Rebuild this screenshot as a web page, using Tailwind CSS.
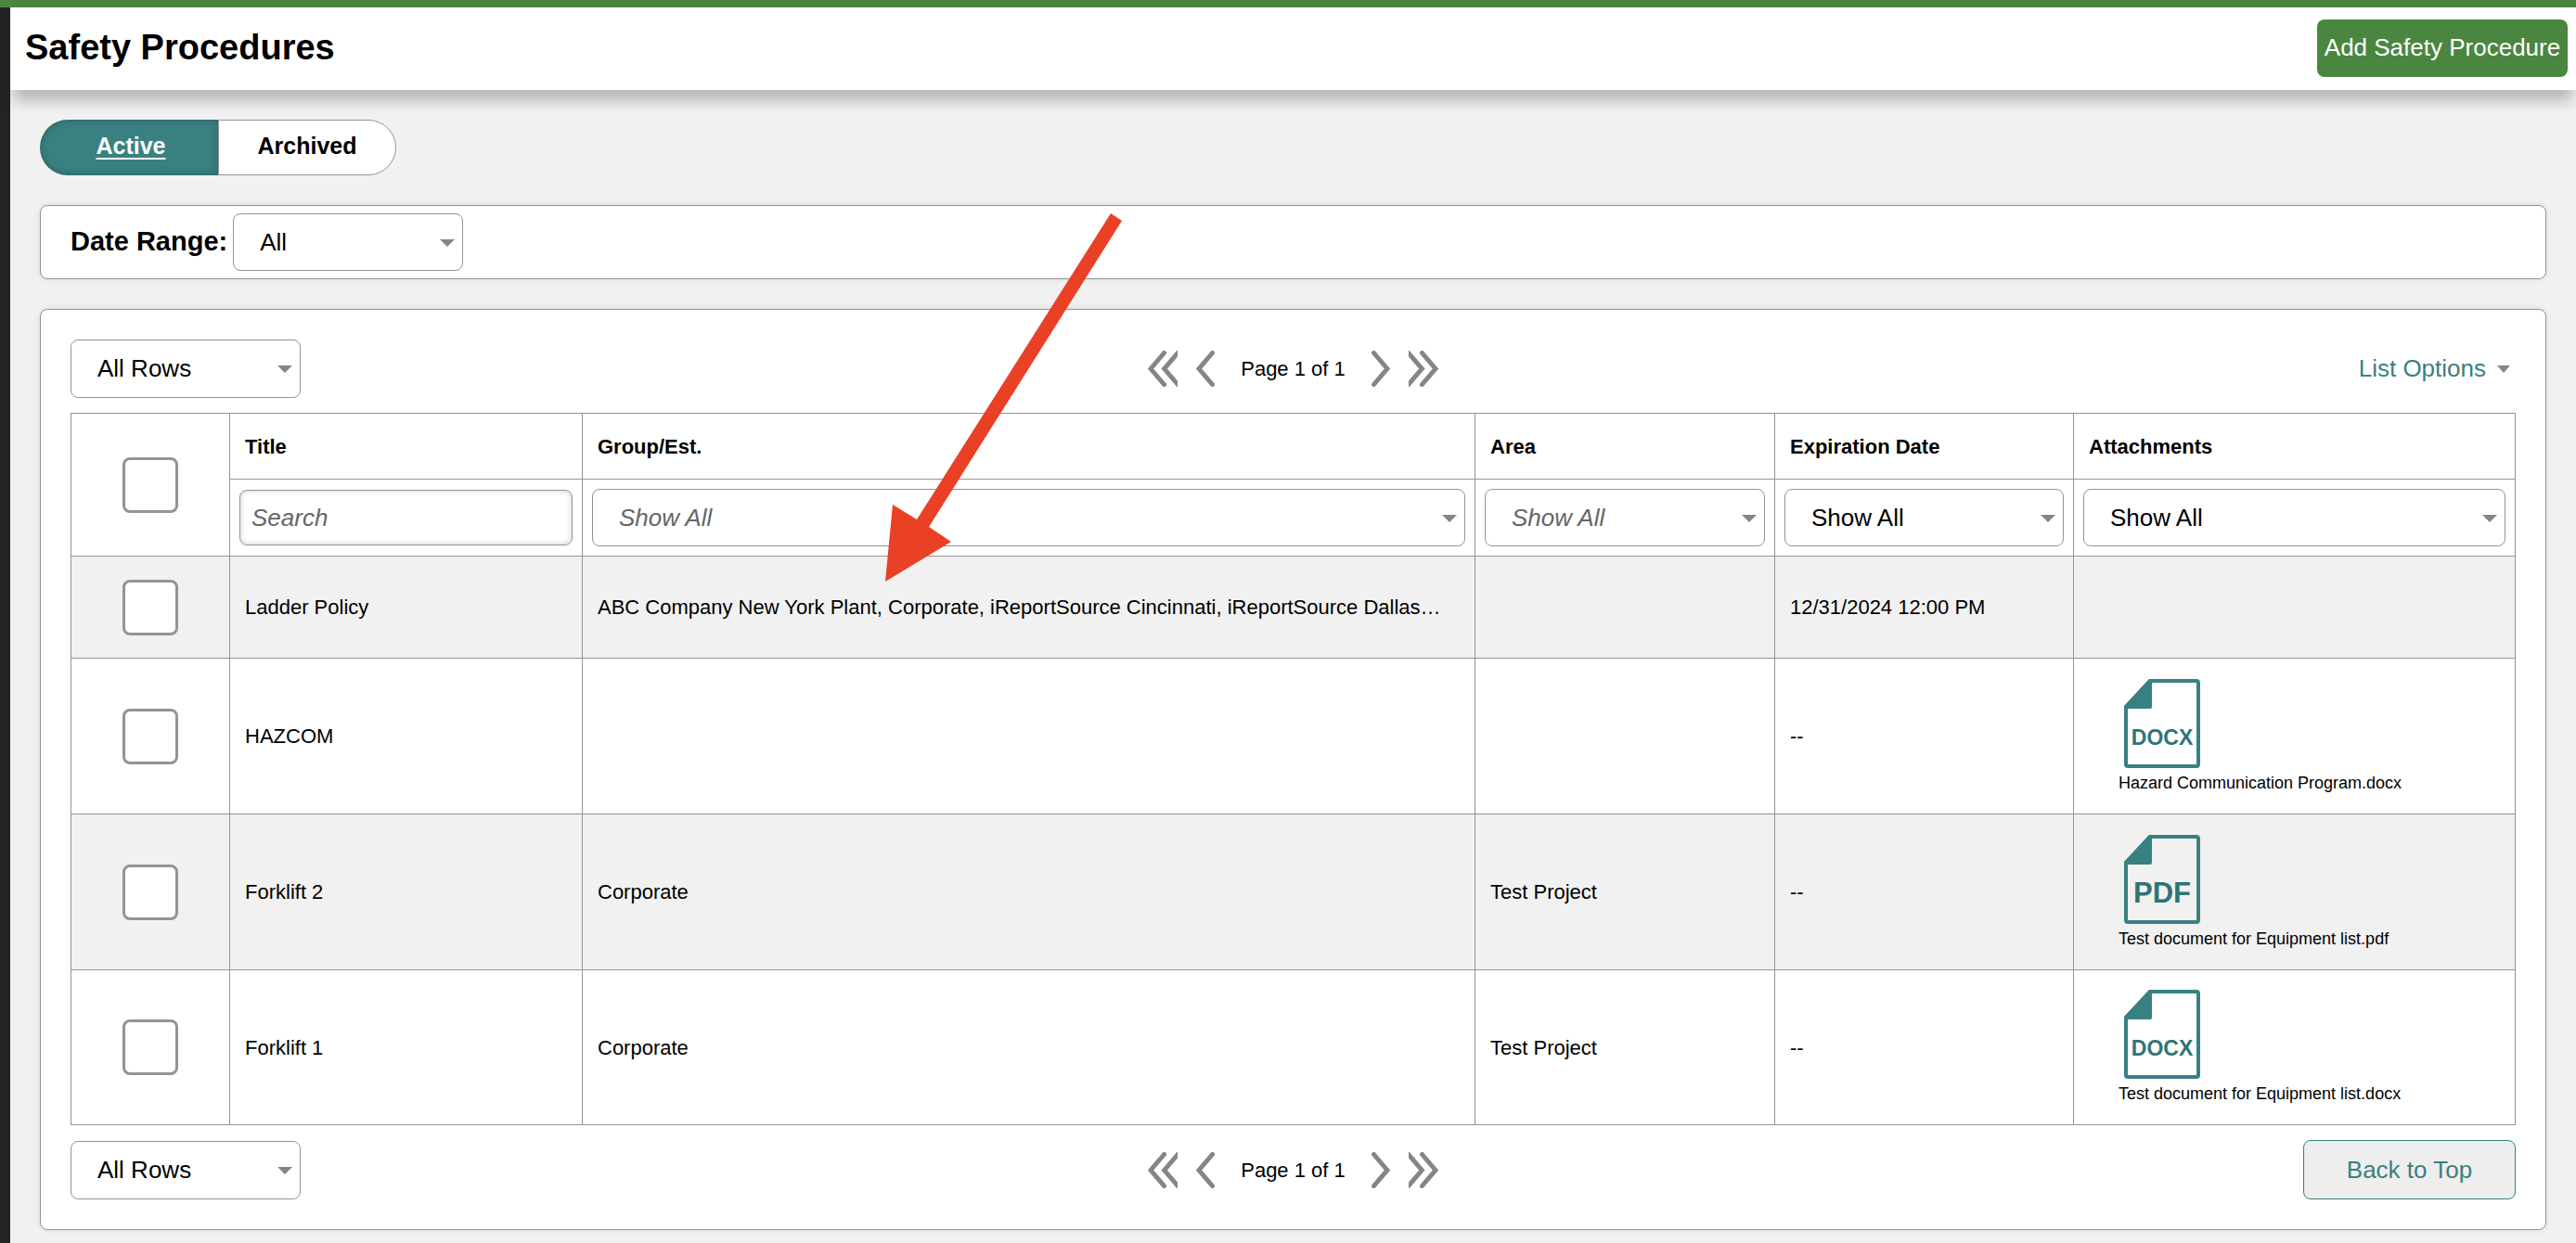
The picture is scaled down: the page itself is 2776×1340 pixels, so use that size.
<!DOCTYPE html>
<html lang="en">
<head>
<meta charset="utf-8">
<title>Safety Procedures</title>
<script src="https://cdn.jsdelivr.net/npm/@tailwindcss/browser@4"></script>
</head>
<body class="relative flex min-h-screen flex-col bg-[#f1f1f1] font-['Liberation_Sans',Arial,sans-serif] text-[22px] text-black">

<!-- Shared icon shapes -->
<svg class="hidden" aria-hidden="true">
  <symbol id="caret" viewBox="0 0 16 8"><path d="M0 0H16L8 8Z" fill="#858585"/></symbol>
  <symbol id="prev" viewBox="0 0 20 39"><path d="M17.500 2.500L3 19.500L17.500 36.500" fill="none" stroke="#858585" stroke-width="5" stroke-linecap="round"/></symbol>
  <symbol id="first" viewBox="0 0 32 39"><path d="M17.500 2.500L3 19.500L17.500 36.500M32.200 2.500L17.700 19.500L32.200 36.500" fill="none" stroke="#858585" stroke-width="5" stroke-linecap="round"/></symbol>
  <symbol id="file" viewBox="0 0 82 96"><path d="M28 2H78Q80 2 80 4V92Q80 94 78 94H4Q2 94 2 92V30Z" fill="none" stroke="#398082" stroke-width="4"/><path d="M27 0H30V30Q30 32 28 32H0V29Z" fill="#398082"/></symbol>
</svg>

<div class="h-2 bg-[#4a8640]"></div>
<div class="flex flex-1">
  <aside class="w-[11px] shrink-0 bg-[#232325]"></aside>
  <div class="min-w-0 flex-1">

    <header class="flex h-[89px] items-center justify-between bg-white pr-[9px] pb-0.5 pl-4 shadow-[0_16px_14px_-4px_rgba(0,0,0,0.24)]">
      <h1 class="text-[38px] font-bold">Safety Procedures</h1>
      <button type="button" class="h-[62px] w-[270px] rounded-lg bg-[#4a8640] text-[26px] whitespace-nowrap text-white">Add Safety Procedure</button>
    </header>

    <main class="flex flex-col gap-8 pt-8 pr-8 pb-3 pl-8">
      <nav class="flex h-[60px] text-[25px] font-bold">
        <a href="#active" class="flex w-48 items-center justify-center rounded-l-full bg-[#398082] pb-0.5 pl-1 text-white underline decoration-2 underline-offset-4 shadow-[inset_0_0_10px_rgba(0,0,0,0.25)]">Active</a>
        <a href="#archived" class="flex w-48 items-center justify-center rounded-r-full border border-[#949494] bg-white pb-0.5">Archived</a>
      </nav>

      <section class="flex h-20 items-center gap-1.5 rounded-lg border border-[#949494] bg-white px-8 shadow-[0_0_6px_rgba(0,0,0,0.1)]">
        <label for="range" class="text-[29px] font-bold">Date Range:</label>
        <div class="relative w-[248px]">
          <select id="range" class="block h-[62px] w-full appearance-none rounded-lg border border-[#949494] bg-white px-7 text-[26px]"><option>All</option></select>
          <svg class="pointer-events-none absolute top-7 right-[9px] h-2 w-4"><use href="#caret"/></svg>
        </div>
      </section>

      <section class="rounded-lg border border-[#949494] bg-white px-8 py-8 shadow-[0_0_6px_rgba(0,0,0,0.1)]">
        <div class="mb-4 grid grid-cols-[1fr_auto_1fr] items-center">
          <div class="relative w-[248px]">
            <select aria-label="Rows per page" class="block h-[63px] w-full appearance-none rounded-lg border border-[#949494] bg-white px-7 text-[26px]"><option>All Rows</option></select>
            <svg class="pointer-events-none absolute top-7 right-[9px] h-2 w-4"><use href="#caret"/></svg>
          </div>
          <div class="flex items-center">
            <button type="button" aria-label="First page"><svg class="h-[39px] w-8"><use href="#first"/></svg></button>
            <button type="button" aria-label="Previous page" class="ml-5"><svg class="h-[39px] w-5"><use href="#prev"/></svg></button>
            <span class="mx-7">Page 1 of 1</span>
            <button type="button" aria-label="Next page" class="mr-5"><svg class="h-[39px] w-5 rotate-180"><use href="#prev"/></svg></button>
            <button type="button" aria-label="Last page"><svg class="h-[39px] w-8 rotate-180"><use href="#first"/></svg></button>
          </div>
          <button type="button" class="flex items-center gap-3 justify-self-end pr-1.5 text-[26px] text-[#398082]">List Options <svg class="h-2 w-3.5" viewBox="0 0 14 8"><path d="M0 0H14L7 8Z" fill="#858585"/></svg></button>
        </div>

        <table class="w-full table-fixed border-collapse text-left [&_td]:border [&_td]:border-[#949494] [&_th]:border [&_th]:border-[#949494]">
          <colgroup><col class="w-[171px]"><col class="w-[380px]"><col><col class="w-[323px]"><col class="w-[322px]"><col class="w-[476px]"></colgroup>
          <thead>
            <tr class="h-[71px]">
              <th rowspan="2" class="text-center"><input type="checkbox" aria-label="Select all" class="mx-auto block h-[60px] w-[60px] appearance-none rounded-lg border-3 border-[#949494] bg-white"></th>
              <th scope="col" class="px-4">Title</th>
              <th scope="col" class="px-4">Group/Est.</th>
              <th scope="col" class="px-4">Area</th>
              <th scope="col" class="px-4">Expiration Date</th>
              <th scope="col" class="px-4">Attachments</th>
            </tr>
            <tr class="h-[83px] font-normal">
              <td class="px-[10px]"><input type="text" placeholder="Search" aria-label="Search title" class="block h-[60px] w-full rounded-lg border border-[#949494] bg-white px-3 text-[26px] italic shadow-[inset_0_0_6px_rgba(0,0,0,0.2)] placeholder:text-[#666]"></td>
              <td class="px-[10px]"><div class="relative"><select aria-label="Filter group" class="block h-[62px] w-full appearance-none rounded-lg border border-[#949494] bg-white px-7 text-[26px] text-[#666] italic"><option>Show All</option></select><svg class="pointer-events-none absolute top-7 right-[9px] h-2 w-4"><use href="#caret"/></svg></div></td>
              <td class="px-[10px]"><div class="relative"><select aria-label="Filter area" class="block h-[62px] w-full appearance-none rounded-lg border border-[#949494] bg-white px-7 text-[26px] text-[#666] italic"><option>Show All</option></select><svg class="pointer-events-none absolute top-7 right-[9px] h-2 w-4"><use href="#caret"/></svg></div></td>
              <td class="px-[10px]"><div class="relative"><select aria-label="Filter expiration date" class="block h-[62px] w-full appearance-none rounded-lg border border-[#949494] bg-white px-7 text-[26px]"><option>Show All</option></select><svg class="pointer-events-none absolute top-7 right-[9px] h-2 w-4"><use href="#caret"/></svg></div></td>
              <td class="px-[10px]"><div class="relative"><select aria-label="Filter attachments" class="block h-[62px] w-full appearance-none rounded-lg border border-[#949494] bg-white px-7 text-[26px]"><option>Show All</option></select><svg class="pointer-events-none absolute top-7 right-[9px] h-2 w-4"><use href="#caret"/></svg></div></td>
            </tr>
          </thead>
          <tbody>
            <tr class="h-[110px] bg-[#f1f1f1]">
              <td><input type="checkbox" aria-label="Select Ladder Policy" class="mx-auto block h-[60px] w-[60px] appearance-none rounded-lg border-3 border-[#949494] bg-white"></td>
              <td class="px-4">Ladder Policy</td>
              <td class="px-4 whitespace-nowrap">ABC Company New York Plant, Corporate, iReportSource Cincinnati, iReportSource Dallas…</td>
              <td class="px-4"></td>
              <td class="px-4">12/31/2024 12:00 PM</td>
              <td></td>
            </tr>
            <tr class="h-[168px]">
              <td><input type="checkbox" aria-label="Select HAZCOM" class="mx-auto block h-[60px] w-[60px] appearance-none rounded-lg border-3 border-[#949494] bg-white"></td>
              <td class="px-4">HAZCOM</td>
              <td class="px-4"></td>
              <td class="px-4"></td>
              <td class="px-4">--</td>
              <td class="pl-12"><a href="#hazcom" class="block text-[18px] leading-6"><svg class="mb-1 ml-1.5 h-24 w-[82px]" viewBox="0 0 82 96"><use href="#file"/><text x="41" y="71" text-anchor="middle" font-size="23" font-weight="700" fill="#2f7476">DOCX</text></svg>Hazard Communication Program.docx</a></td>
            </tr>
            <tr class="h-[168px] bg-[#f1f1f1]">
              <td><input type="checkbox" aria-label="Select Forklift 2" class="mx-auto block h-[60px] w-[60px] appearance-none rounded-lg border-3 border-[#949494] bg-white"></td>
              <td class="px-4">Forklift 2</td>
              <td class="px-4">Corporate</td>
              <td class="px-4">Test Project</td>
              <td class="px-4">--</td>
              <td class="pl-12"><a href="#forklift2" class="block text-[18px] leading-6"><svg class="mb-1 ml-1.5 h-24 w-[82px]" viewBox="0 0 82 96"><use href="#file"/><text x="41" y="73" text-anchor="middle" font-size="31" font-weight="700" fill="#2f7476">PDF</text></svg>Test document for Equipment list.pdf</a></td>
            </tr>
            <tr class="h-[167px]">
              <td><input type="checkbox" aria-label="Select Forklift 1" class="mx-auto block h-[60px] w-[60px] appearance-none rounded-lg border-3 border-[#949494] bg-white"></td>
              <td class="px-4">Forklift 1</td>
              <td class="px-4">Corporate</td>
              <td class="px-4">Test Project</td>
              <td class="px-4">--</td>
              <td class="pl-12"><a href="#forklift1" class="block text-[18px] leading-6"><svg class="mb-1 ml-1.5 h-24 w-[82px]" viewBox="0 0 82 96"><use href="#file"/><text x="41" y="71" text-anchor="middle" font-size="23" font-weight="700" fill="#2f7476">DOCX</text></svg>Test document for Equipment list.docx</a></td>
            </tr>
          </tbody>
        </table>

        <div class="mt-4 grid grid-cols-[1fr_auto_1fr] items-center">
          <div class="relative w-[248px]">
            <select aria-label="Rows per page" class="block h-[63px] w-full appearance-none rounded-lg border border-[#949494] bg-white px-7 text-[26px]"><option>All Rows</option></select>
            <svg class="pointer-events-none absolute top-7 right-[9px] h-2 w-4"><use href="#caret"/></svg>
          </div>
          <div class="flex items-center">
            <button type="button" aria-label="First page"><svg class="h-[39px] w-8"><use href="#first"/></svg></button>
            <button type="button" aria-label="Previous page" class="ml-5"><svg class="h-[39px] w-5"><use href="#prev"/></svg></button>
            <span class="mx-7">Page 1 of 1</span>
            <button type="button" aria-label="Next page" class="mr-5"><svg class="h-[39px] w-5 rotate-180"><use href="#prev"/></svg></button>
            <button type="button" aria-label="Last page"><svg class="h-[39px] w-8 rotate-180"><use href="#first"/></svg></button>
          </div>
          <button type="button" class="h-16 w-[229px] justify-self-end rounded-lg border border-[#398082] bg-[#eee] text-[26px] text-[#398082]">Back to Top</button>
        </div>
      </section>
    </main>
  </div>
</div>

<!-- Callout arrow pointing at the group column -->
<svg class="pointer-events-none absolute top-[230px] left-[954px] h-[397px] w-[255px]" viewBox="0 0 255 397" aria-hidden="true"><path d="M243 0L255 8L47 338L71 354L0 397L8 314L34 330Z" fill="#ea4025"/></svg>
</body>
</html>
